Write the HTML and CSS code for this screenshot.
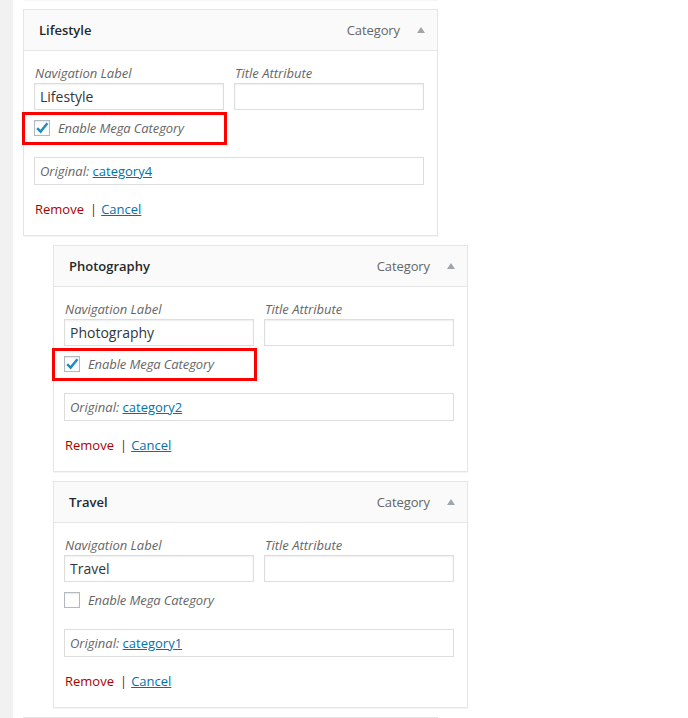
FILE: index.html
```html
<!DOCTYPE html>
<html>
<head>
<meta charset="utf-8">
<link rel="stylesheet" href="styles.css">
</head>
<body>
<div class="page">
  <div class="sidebar"></div>
  <div class="content">
    <div class="stub"></div>

    <div class="item">
      <div class="handle">
        <span class="title">Lifestyle</span>
        <span class="controls"><span class="type">Category</span><span class="arrow"></span></span>
      </div>
      <div class="settings">
        <div class="fields">
          <div class="field"><span class="label">Navigation Label</span><div class="input">Lifestyle</div></div>
          <div class="field"><span class="label">Title Attribute</span><div class="input"></div></div>
        </div>
        <div class="check-row highlight">
          <span class="checkbox"><svg viewBox="0 0 16 16" width="16" height="16"><path d="M3.2 8.2 L6.6 11.6 L13.4 3.2" fill="none" stroke="#1e8cbe" stroke-width="2.4" stroke-linejoin="miter"/></svg></span>
          <span class="check-label">Enable Mega Category</span>
        </div>
        <div class="original">Original: <a class="link" href="#">category4</a></div>
        <div class="actions"><a class="remove" href="#">Remove</a><span class="sep">|</span><a class="link" href="#">Cancel</a></div>
      </div>
    </div>

    <div class="item depth1">
      <div class="handle">
        <span class="title">Photography</span>
        <span class="controls"><span class="type">Category</span><span class="arrow"></span></span>
      </div>
      <div class="settings">
        <div class="fields">
          <div class="field"><span class="label">Navigation Label</span><div class="input">Photography</div></div>
          <div class="field"><span class="label">Title Attribute</span><div class="input"></div></div>
        </div>
        <div class="check-row highlight">
          <span class="checkbox"><svg viewBox="0 0 16 16" width="16" height="16"><path d="M3.2 8.2 L6.6 11.6 L13.4 3.2" fill="none" stroke="#1e8cbe" stroke-width="2.4" stroke-linejoin="miter"/></svg></span>
          <span class="check-label">Enable Mega Category</span>
        </div>
        <div class="original">Original: <a class="link" href="#">category2</a></div>
        <div class="actions"><a class="remove" href="#">Remove</a><span class="sep">|</span><a class="link" href="#">Cancel</a></div>
      </div>
    </div>

    <div class="item depth1">
      <div class="handle">
        <span class="title">Travel</span>
        <span class="controls"><span class="type">Category</span><span class="arrow"></span></span>
      </div>
      <div class="settings">
        <div class="fields">
          <div class="field"><span class="label">Navigation Label</span><div class="input">Travel</div></div>
          <div class="field"><span class="label">Title Attribute</span><div class="input"></div></div>
        </div>
        <div class="check-row">
          <span class="checkbox"></span>
          <span class="check-label">Enable Mega Category</span>
        </div>
        <div class="original">Original: <a class="link" href="#">category1</a></div>
        <div class="actions"><a class="remove" href="#">Remove</a><span class="sep">|</span><a class="link" href="#">Cancel</a></div>
      </div>
    </div>

    <div class="next"></div>
  </div>
</div>
</body>
</html>
```

FILE: styles.css
```css
html, body {
  margin: 0;
  padding: 0;
  background: #fff;
  font-family: "Open Sans", "Liberation Sans", sans-serif;
  font-size: 13px;
  color: #444;
}

.page {
  display: flex;
  min-height: 100vh;
  overflow: hidden;
}

.sidebar {
  width: 13px;
  flex: 0 0 13px;
  background: #f1f1f1;
}

.content {
  padding-left: 10px;
  flex: 1;
}

.stub {
  width: 415px;
  height: 0;
  margin-top: -1px;
  border-bottom: 1px solid #e5e5e5;
  box-shadow: 0 1px 1px rgba(0, 0, 0, 0.04);
}

.item {
  width: 415px;
  margin-top: 9px;
  box-sizing: border-box;
}

.item.depth1 {
  margin-left: 30px;
}

.handle {
  display: flex;
  justify-content: space-between;
  align-items: center;
  border: 1px solid #e5e5e5;
  background: #fafafa;
  padding: 10px 12px 10px 15px;
  line-height: 20px;
  height: 20px;
}

.title {
  font-weight: 600;
  font-size: 13px;
  color: #23282d;
}

.controls {
  display: flex;
  align-items: center;
}

.type {
  color: #666;
  font-size: 13px;
  letter-spacing: -0.1px;
}

.arrow {
  width: 0;
  height: 0;
  margin-left: 17px;
  border-left: 4px solid transparent;
  border-right: 4px solid transparent;
  border-bottom: 6px solid #a0a5aa;
}

.settings {
  border: 1px solid #e5e5e5;
  border-top: none;
  padding: 13px 13px 16px 10px;
  box-shadow: 0 1px 1px rgba(0, 0, 0, 0.04);
}

.fields {
  display: flex;
  gap: 10px;
}

.field {
  display: flex;
  flex-direction: column;
  width: 190px;
}

.label {
  font-style: italic;
  color: #666;
  line-height: 18px;
  padding-left: 1px;
}

.input {
  margin-top: 1px;
  height: 25px;
  border: 1px solid #ddd;
  box-shadow: inset 0 1px 2px rgba(0, 0, 0, 0.07);
  padding: 0 5px;
  font-size: 14px;
  line-height: 25px;
  color: #32373c;
}

.check-row {
  position: relative;
  display: flex;
  align-items: center;
  height: 16px;
  margin-top: 10px;
}

.check-row.highlight::after {
  content: "";
  position: absolute;
  left: -12px;
  top: -8px;
  width: 199px;
  height: 27px;
  border: 3px solid #f00;
}

.checkbox {
  width: 14px;
  height: 14px;
  border: 1px solid #b4b9be;
  background: #fff;
  box-shadow: inset 0 1px 2px rgba(0, 0, 0, 0.1);
  position: relative;
  flex: 0 0 14px;
}

.checkbox svg {
  position: absolute;
  left: -1px;
  top: -1px;
}

.check-label {
  margin-left: 8px;
  font-style: italic;
  color: #666;
  letter-spacing: -0.1px;
}

.original {
  margin-top: 21px;
  height: 26px;
  line-height: 26px;
  border: 1px solid #ddd;
  padding: 0 5px;
  font-style: italic;
  color: #666;
}

.link {
  color: #0073aa;
  text-decoration: underline;
  font-style: normal;
}

.actions {
  margin-top: 14px;
  line-height: 20px;
  padding-left: 1px;
}

.remove {
  color: #a00;
  text-decoration: none;
}

.sep {
  color: #a00;
  padding: 0 4px 0 6px;
}

.next {
  width: 415px;
  height: 30px;
  margin-top: 9px;
  border: 1px solid #e5e5e5;
  box-sizing: border-box;
}
```
